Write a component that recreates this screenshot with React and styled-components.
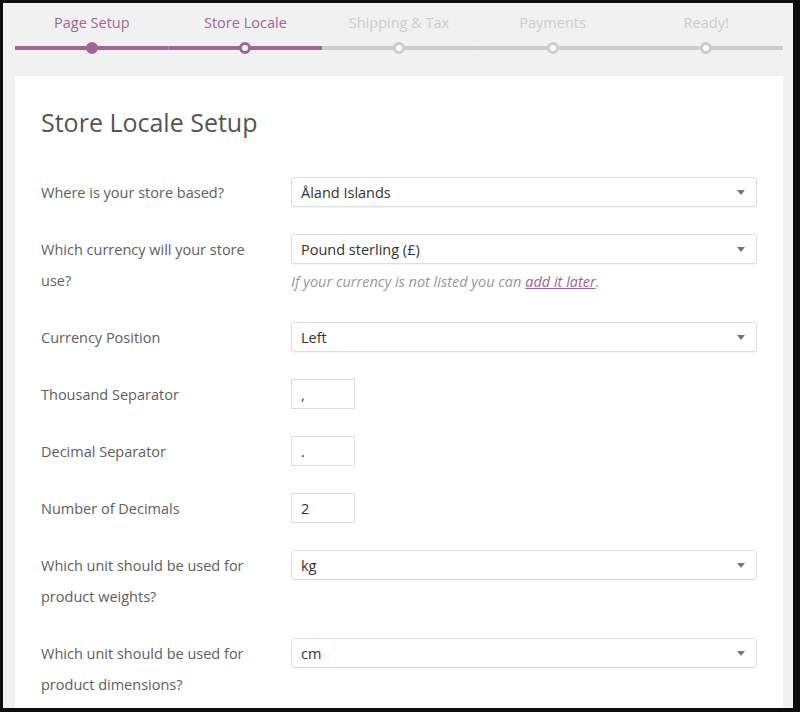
import styled, { createGlobalStyle } from 'styled-components';

const GlobalStyle = createGlobalStyle`
  html, body {
    margin: 0;
    padding: 0;
    background: #000;
  }
  * {
    box-sizing: border-box;
  }
`;

const PURPLE = '#a46497';

const Frame = styled.div`
  height: 712px;
  overflow: hidden;
  background: #f1f1f1;
  border-style: solid;
  border-color: #0d0d0d;
  border-width: 3px 7px 4px 3px;
  padding: 0 10px 0 12px;
  font-family: "Open Sans", "Noto Sans", sans-serif;
`;

const Steps = styled.ol`
  display: flex;
  list-style: none;
  margin: 0;
  padding: 9px 0 0;
`;

const Step = styled.li`
  flex: 1;
  display: flex;
  flex-direction: column;
  align-items: center;
  gap: 8px;
`;

const StepLabel = styled.span`
  font-size: 14.5px;
  line-height: 22px;
  color: ${(p) => (p.$done ? PURPLE : '#cccccc')};
`;

const Track = styled.div`
  width: 100%;
  height: 12px;
  display: flex;
  align-items: center;
  justify-content: center;
  background: linear-gradient(${(p) => p.$color}, ${(p) => p.$color}) center / 100% 4px no-repeat;
`;

const Dot = styled.span`
  width: 12px;
  height: 12px;
  border-radius: 50%;
  border: 3px solid ${(p) => (p.$state === 'todo' ? '#cccccc' : PURPLE)};
  background: ${(p) => (p.$state === 'done' ? PURPLE : '#ffffff')};
`;

const Card = styled.div`
  margin-top: 22px;
  background: #fff;
  padding: 28px 26px 40px;
  min-height: 700px;
`;

const Title = styled.h1`
  margin: 0 0 37px;
  font-size: 25px;
  line-height: 36px;
  font-weight: 400;
  color: #555;
`;

const Form = styled.div`
  display: flex;
  flex-direction: column;
  gap: 26px;
`;

const Row = styled.div`
  display: grid;
  grid-template-columns: 250px 1fr;
  align-items: start;
`;

const Label = styled.label`
  font-size: 14.5px;
  line-height: 31px;
  color: #606060;
  padding-right: 30px;
`;

const Field = styled.div`
  display: flex;
  flex-direction: column;
`;

const Select = styled.div`
  height: 30px;
  border: 1px solid #ddd;
  border-radius: 3px;
  display: flex;
  align-items: center;
  justify-content: space-between;
  padding: 0 10px 0 9px;
  font-size: 14.5px;
  color: #333;
  box-shadow: 0 1px 1px rgba(0, 0, 0, 0.04);
`;

const Caret = styled.span`
  width: 0;
  height: 0;
  border-left: 4px solid transparent;
  border-right: 4px solid transparent;
  border-top: 5px solid #777;
  margin-right: 1px;
`;

const SmallInput = styled.div`
  width: 64px;
  height: 30px;
  border: 1px solid #ddd;
  display: flex;
  align-items: center;
  padding: 0 9px;
  font-size: 14.5px;
  color: #333;
`;

const Help = styled.p`
  margin: 8px 0 0;
  font-size: 14.5px;
  line-height: 20px;
  font-style: italic;
  color: #999;

  a {
    color: ${PURPLE};
  }
`;

const steps = [
  { name: 'Page Setup', state: 'done' },
  { name: 'Store Locale', state: 'active' },
  { name: 'Shipping & Tax', state: 'todo' },
  { name: 'Payments', state: 'todo' },
  { name: 'Ready!', state: 'todo' },
];

const DropdownField = ({ value }) => (
  <Select>
    <span>{value}</span>
    <Caret />
  </Select>
);

export default function App() {
  return (
    <>
      <GlobalStyle />
      <Frame>
        <Steps>
          {steps.map((s) => (
            <Step key={s.name}>
              <StepLabel $done={s.state !== 'todo'}>{s.name}</StepLabel>
              <Track $color={s.state !== 'todo' ? PURPLE : '#cccccc'}>
                <Dot $state={s.state} />
              </Track>
            </Step>
          ))}
        </Steps>

        <Card>
          <Title>Store Locale Setup</Title>
          <Form>
            <Row>
              <Label>Where is your store based?</Label>
              <DropdownField value="Åland Islands" />
            </Row>
            <Row>
              <Label>Which currency will your store use?</Label>
              <Field>
                <DropdownField value="Pound sterling (£)" />
                <Help>
                  If your currency is not listed you can <a href="#">add it later</a>.
                </Help>
              </Field>
            </Row>
            <Row>
              <Label>Currency Position</Label>
              <DropdownField value="Left" />
            </Row>
            <Row>
              <Label>Thousand Separator</Label>
              <SmallInput>,</SmallInput>
            </Row>
            <Row>
              <Label>Decimal Separator</Label>
              <SmallInput>.</SmallInput>
            </Row>
            <Row>
              <Label>Number of Decimals</Label>
              <SmallInput>2</SmallInput>
            </Row>
            <Row>
              <Label>Which unit should be used for product weights?</Label>
              <DropdownField value="kg" />
            </Row>
            <Row>
              <Label>Which unit should be used for product dimensions?</Label>
              <DropdownField value="cm" />
            </Row>
          </Form>
        </Card>
      </Frame>
    </>
  );
}
